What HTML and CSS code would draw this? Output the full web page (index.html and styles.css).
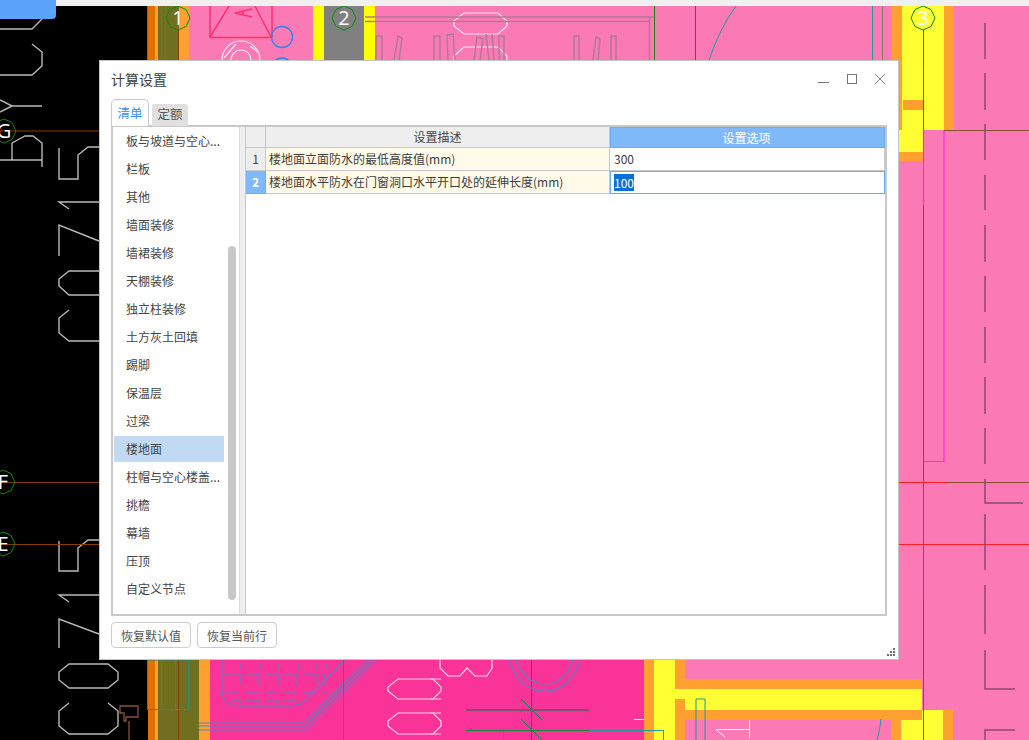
FILE: index.html
```html
<!DOCTYPE html>
<html lang="zh-CN">
<head>
<meta charset="utf-8">
<title>计算设置</title>
<link rel="stylesheet" href="styles.css">
</head>
<body>
<div class="desktop">
  <svg class="cad" width="1029" height="740" viewBox="0 0 1029 740" xmlns="http://www.w3.org/2000/svg">
    <rect x="0" y="6" width="1029" height="734" fill="#000"/>
    <!-- top-left columns -->
    <rect x="148" y="6" width="7" height="734" fill="#e07000"/>
    <rect x="155" y="6" width="3" height="734" fill="#ffa030"/>
    <rect x="158" y="6" width="21" height="60" fill="#6f6f1f"/>
    <rect x="179" y="6" width="10" height="60" fill="#ffa030"/>
    <rect x="189" y="6" width="124" height="60" fill="#fb7ab6"/>
    <rect x="313" y="6" width="11" height="60" fill="#ffff00"/>
    <rect x="324" y="6" width="40" height="60" fill="#808080"/>
    <rect x="364" y="6" width="11" height="60" fill="#ffff00"/>
    <rect x="375" y="6" width="654" height="734" fill="#fb7ab6"/>
    <!-- top-right band -->
    <rect x="892" y="6" width="10" height="124" fill="#ffa030"/>
    <rect x="902" y="6" width="42" height="124" fill="#ffff33"/>
    <rect x="944" y="6" width="10" height="124" fill="#ffa030"/>
    <rect x="898" y="130" width="25" height="22" fill="#ffff33"/>
    <rect x="898" y="152" width="25" height="9" fill="#ffa030"/>
    <rect x="903" y="100" width="20" height="10" fill="#ffa030"/>
    <!-- bottom columns -->
    <rect x="158" y="660" width="41" height="80" fill="#6f6f1f"/>
    <rect x="199" y="660" width="11" height="80" fill="#ffa030"/>
    <rect x="210" y="660" width="434" height="80" fill="#f93397"/>
    <rect x="644" y="660" width="10" height="80" fill="#ffa030"/>
    <rect x="654" y="660" width="21" height="80" fill="#ffff33"/>
    <rect x="675" y="660" width="10" height="80" fill="#ffa030"/>
    <rect x="685" y="679" width="237" height="10" fill="#ffa030"/>
    <rect x="675" y="689" width="247" height="21" fill="#ffff33"/>
    <rect x="675" y="699" width="10" height="11" fill="#ffa030"/>
    <rect x="685" y="710" width="237" height="10" fill="#ffa030"/>
    <rect x="891" y="720" width="10" height="20" fill="#ffa030"/>
    <rect x="901" y="720" width="42" height="20" fill="#ffff33"/>
    <rect x="922" y="710" width="21" height="10" fill="#ffff33"/>
    <rect x="943" y="710" width="10" height="30" fill="#ffa030"/>
    <g fill="none" stroke="#b9b9b9" stroke-width="1.4">
      <polyline points="0,29 32,29 42,19"/>
      <polyline points="32,44 42,52 42,66 32,75 0,75"/>
      <polyline points="0,100 12,106 42,106"/>
      <polyline points="12,106 0,112"/>
      <polyline points="0,160 42,160"/>
      <polyline points="12,143 25,136 33,136 42,143 42,167"/>
      <polyline points="59,148 59,179 78,179 78,155 88,147 99,147"/>
      <polyline points="69,209 59,202 99,202"/>
      <polyline points="59,256 59,225 99,241"/>
      <polyline points="99,271 69,271 59,279 59,286 69,295 99,295"/>
      <polyline points="69,310 59,318 59,333 69,341 99,341"/>
      <polyline points="59,541 59,571 78,571 78,548 88,540 99,540"/>
      <polyline points="69,602 59,595 99,595"/>
      <polyline points="59,648 59,619 99,634"/>
      <polygon points="69,664 108,664 118,672 118,680 108,688 69,688 59,680 59,672"/>
      <polyline points="69,703 59,711 59,726 69,734 108,734 118,726 118,711 108,703"/>
    </g>
    <g fill="none" stroke="#fff" stroke-width="1">
      <polyline points="12,143 12,160"/>
    </g>
    <g fill="none" stroke="#8a5040" stroke-width="1.3">
      <polygon points="120,706 138,706 138,717 126,717 126,721 124,721 124,713 120,713"/>
      <line x1="129" y1="721" x2="129" y2="740"/>
    </g>
    <g stroke="#8a3c00" stroke-width="1">
      <line x1="0" y1="131" x2="99" y2="131"/>
      <line x1="0" y1="482.500" x2="99" y2="482.500"/>
      <line x1="0" y1="544.500" x2="99" y2="544.500"/>
      <line x1="178.500" y1="30" x2="178.500" y2="66"/>
      <line x1="178.500" y1="660" x2="178.500" y2="740"/>
    </g>
    <g fill="none" stroke="#2f8a70" stroke-width="1">
      <line x1="147.500" y1="6" x2="147.500" y2="66"/>
      <line x1="161.500" y1="6" x2="161.500" y2="66"/>
      <line x1="165.500" y1="6" x2="165.500" y2="66"/>
      <rect x="147.500" y="660" width="41" height="49.500"/>
      <line x1="161.500" y1="660" x2="161.500" y2="709"/>
      <line x1="175.500" y1="660" x2="175.500" y2="709"/>
    </g>
    <!-- grid bubbles -->
    <g fill="none" stroke="#0f8a0f" stroke-width="1">
      <polygon points="178,6 186,9.500 190,18 186,26.500 178,30 170,26.500 166,18 170,9.500"/>
      <polygon points="344,6 352,9.500 356,18 352,26.500 344,30 336,26.500 332,18 336,9.500"/>
      <polygon points="923,6 931,9.500 935,18 931,26.500 923,30 915,26.500 911,18 915,9.500"/>
      <polygon points="4,119 12,122.500 16,131 12,139.500 4,143 -4,139.500 -8,131 -4,122.500"/>
      <polygon points="3,470 11,473.500 15,482 11,490.500 3,494 -5,490.500 -9,482 -5,473.500"/>
      <polygon points="3,532 11,535.500 15,544 11,552.500 3,556 -5,552.500 -9,544 -5,535.500"/>
      <line x1="923.500" y1="30" x2="923.500" y2="65"/>
      <line x1="654.500" y1="6" x2="654.500" y2="60"/>
      <line x1="695.500" y1="6" x2="695.500" y2="60"/>
      <line x1="531.500" y1="660" x2="531.500" y2="740"/>
    </g>
    <g class="bubble-label" fill="#fff" text-anchor="middle">
      <text x="178" y="25">1</text>
      <text x="344" y="25">2</text>
      <text x="923" y="25">3</text>
      <text x="4" y="138">G</text>
      <text x="3" y="489">F</text>
      <text x="3" y="551">E</text>
    </g>
    <!-- top detail -->
    <g fill="none" stroke="#ff2f70" stroke-width="1.5">
      <polyline points="210,6 210,37.500 272,37.500 272,6"/>
      <line x1="210" y1="37" x2="229" y2="6"/>
      <line x1="255" y1="6" x2="271" y2="37"/>
      <polyline points="252,9 235,13 252,17"/>
      <polyline points="243,11 243,15"/>
    </g>
    <g fill="none" stroke="#2e86e8" stroke-width="1.3">
      <circle cx="282" cy="37" r="10.500"/>
      <circle cx="282" cy="68" r="10"/>
    </g>
    <g fill="none" stroke="#ffe4f0" stroke-width="1.200">
      <circle cx="241" cy="60" r="19"/>
      <circle cx="241" cy="60" r="10"/>
      <line x1="224" y1="58" x2="236" y2="44"/>
      <line x1="258" y1="52" x2="250" y2="46"/>
      <polygon points="464,13 498,13 507,21 507,26 498,34 464,34 454,26 454,21"/>
      <polyline points="454,60 454,56 464,47 498,47 507,56 507,60"/>
    </g>
    <g fill="none" stroke="#b07a95" stroke-width="1.500">
      <line x1="365" y1="17" x2="654" y2="17"/>
      <line x1="365" y1="21.500" x2="650" y2="21.500"/>
      <line x1="649.500" y1="17" x2="649.500" y2="60"/>
      <polyline points="376,60 376,36 382,36 382,60"/>
      <polyline points="394,60 398,36 402,38 399,60"/>
      <polyline points="434,60 434,36 440,36 440,60"/>
      <polyline points="448,60 447,35 453,34 455,60"/>
      <polyline points="474,60 477,37 483,39 480,60"/>
      <polyline points="489,60 486,34"/>
      <polyline points="494,60 492,34"/>
      <polyline points="499,60 499,36 504,36 504,60"/>
      <polyline points="574,60 574,36 579,36 579,60"/>
      <polyline points="593,60 596,37 600,39 598,60"/>
      <polyline points="611,60 611,36 616,36 616,60"/>
    </g>
    <g fill="none" stroke="#1f9aa0" stroke-width="1">
      <path d="M709 60 Q720 28 736 6"/>
      <line x1="872.500" y1="6" x2="872.500" y2="60"/>
      <path d="M881 719 Q880 730 877 740"/>
      <polyline points="696,740 696,699 705,699 705,740"/>
      <rect x="503.500" y="730.500" width="160" height="10"/>
    </g>
    <line x1="882.500" y1="6" x2="882.500" y2="60" stroke="#8a7a60" stroke-width="1"/>
    <!-- bottom detail -->
    <g fill="none" stroke="#5a80c4" stroke-width="1.100">
      <path d="M222 660 V690 Q222 706 240 706 H290 Q300 706 306 700 L345 660"/>
      <polyline points="199,723 303,723 368,660"/>
      <polyline points="199,726 305,726 372,660"/>
      <polyline points="199,730 306,730 376,660"/>
      <path d="M509 660 Q520 691 545 691 Q570 691 580 660"/>
      <path d="M516 660 Q525 684 545 684 Q565 684 573 660"/>
      <path d="M241 664V670M260 664V670M279 664V670M298 664V670M317 664V670M326 664V670M224 674H240V685M246 674H259V685M265 674H278V685M284 674H297V685M303 674H316V685M322 674H324V685M226 692H240M246 692H259M265 692H278M284 692H297M303 692H316M322 692H328M232 700H240V706M246 700H259V706M265 700H278V706M284 700H297"/>
    </g>
    <g fill="none" stroke="#ffd4e6" stroke-width="1.200">
      <polyline points="441,679 398,679 388,687 388,691 398,699 441,699"/>
      <polyline points="441,713 398,713 388,721 388,726 398,734 441,734"/>
      <polyline points="440,660 440,668 448,676 460,676 467,668 475,676 487,676 492,668 492,660"/>
      <polyline points="430,679 433,679 441,687 441,691 433,699 430,699"/>
      <polyline points="430,713 433,713 441,721 441,726 433,734 430,734"/>
    </g>
    <line x1="343.500" y1="690" x2="343.500" y2="740" stroke="#ff1f50" stroke-width="1"/>
    <line x1="343.500" y1="660" x2="343.500" y2="690" stroke="#a54a55" stroke-width="1"/>
    <line x1="466" y1="710" x2="589" y2="710" stroke="#805070" stroke-width="2"/>
    <g stroke="#0f8a3a" stroke-width="1">
      <line x1="466" y1="730.500" x2="589" y2="730.500"/>
      <line x1="521" y1="699" x2="542" y2="720"/>
      <line x1="521" y1="719" x2="542" y2="740"/>
    </g>
    <line x1="589" y1="730.500" x2="664" y2="730.500" stroke="#1f9aa0" stroke-width="1"/>
    <line x1="634" y1="719.500" x2="644" y2="719.500" stroke="#fff" stroke-width="1"/>
    <g fill="none" stroke="#fff" stroke-width="1">
      <polyline points="725,737 716,729.500 749,729.500"/>
      <line x1="749.500" y1="720" x2="749.500" y2="738"/>
    </g>
    <!-- right side lines -->
    <g fill="none" stroke="#ff2ad8" stroke-width="1.200">
      <polyline points="923.500,130 923.500,205"/>
      <polyline points="923.500,461.500 944,461.500 944,130"/>
    </g>
    <g stroke="#8a5030" stroke-width="1">
      <line x1="923.500" y1="65" x2="923.500" y2="130"/>
      <line x1="923.500" y1="205" x2="923.500" y2="482"/>
      <line x1="923.500" y1="600" x2="923.500" y2="740"/>
      <line x1="944" y1="130.500" x2="1029" y2="130.500"/>
      <line x1="947" y1="482.500" x2="1029" y2="482.500"/>
    </g>
    <g stroke="#ff1f1f" stroke-width="1">
      <line x1="898" y1="482.500" x2="947" y2="482.500"/>
      <line x1="923.500" y1="482" x2="923.500" y2="600"/>
      <line x1="898" y1="544.500" x2="1029" y2="544.500"/>
    </g>
    <g fill="none" stroke="#8a4a70" stroke-width="1.500">
      <path d="M985 23V59M985 73V110M985 124V160M985 175V210M985 225V262M985 276V312M985 327V363M985 377V414M985 428V464M985 479V503H1023M985 514V570M985 585V634M985 650V689H1015M985 740V730H1015"/>
    </g>
  </svg>
  <div class="topbar"></div>
  <div class="topbar-btn"></div>

  <section class="dialog">
    <header class="titlebar">
      <h1 class="title">计算设置</h1>
      <div class="win-controls">
        <svg class="win-icon" width="12" height="12" viewBox="0 0 12 12"><line x1="0" y1="9.500" x2="11" y2="9.500" stroke="#777" stroke-width="1"/></svg>
        <svg class="win-icon" width="12" height="12" viewBox="0 0 12 12"><rect x="1.500" y="1.500" width="9" height="9" fill="none" stroke="#777" stroke-width="1"/></svg>
        <svg class="win-icon" width="12" height="12" viewBox="0 0 12 12"><path d="M1 1L11 11M11 1L1 11" fill="none" stroke="#888" stroke-width="1"/></svg>
      </div>
    </header>
    <nav class="tabs">
      <span class="tab tab-active">清单</span>
      <span class="tab">定额</span>
    </nav>
    <div class="panel">
      <aside class="side">
        <ul class="list">
          <li class="item">板与坡道与空心...</li>
          <li class="item">栏板</li>
          <li class="item">其他</li>
          <li class="item">墙面装修</li>
          <li class="item">墙裙装修</li>
          <li class="item">天棚装修</li>
          <li class="item">独立柱装修</li>
          <li class="item">土方灰土回填</li>
          <li class="item">踢脚</li>
          <li class="item">保温层</li>
          <li class="item">过梁</li>
          <li class="item item-selected">楼地面</li>
          <li class="item">柱帽与空心楼盖...</li>
          <li class="item">挑檐</li>
          <li class="item">幕墙</li>
          <li class="item">压顶</li>
          <li class="item">自定义节点</li>
        </ul>
        <div class="scroll-thumb"></div>
      </aside>
      <div class="splitter"></div>
      <div class="grid">
        <div class="cell head corner"></div>
        <div class="cell head">设置描述</div>
        <div class="cell head head-active">设置选项</div>
        <div class="cell num">1</div>
        <div class="cell desc">楼地面立面防水的最低高度值(mm)</div>
        <div class="cell value">300</div>
        <div class="cell num num-active">2</div>
        <div class="cell desc">楼地面水平防水在门窗洞口水平开口处的延伸长度(mm)</div>
        <div class="cell value value-edit"><span class="selection">100</span></div>
      </div>
    </div>
    <footer class="actions">
      <button class="btn" type="button">恢复默认值</button>
      <button class="btn" type="button">恢复当前行</button>
    </footer>
    <svg class="grip" width="8" height="8" viewBox="0 0 8 8"><path d="M6 0h2v2H6zM3 3h2v2H3zM6 3h2v2H6zM0 6h2v2H0zM3 6h2v2H3zM6 6h2v2H6z" fill="#6f6f6f"/></svg>
  </section>
</div>
</body>
</html>
```
FILE: styles.css
```css
* { box-sizing: border-box; }
html, body { margin: 0; padding: 0; }
body {
  width: 1029px;
  height: 740px;
  overflow: hidden;
  background: #000;
  font-family: "Noto Sans CJK SC", "Noto Sans", "Liberation Sans", sans-serif;
  font-size: 12px;
  color: #3c3c3c;
}
.desktop { position: relative; width: 1029px; height: 740px; overflow: hidden; background: #f0f0f0; }
.cad { position: absolute; left: 0; top: 0; display: block; }
.bubble-label text { font-family: "Open Sans", "Noto Sans", sans-serif; font-size: 20px; }
.topbar { position: absolute; left: 0; top: 0; width: 1029px; height: 6px; background: #f0f0f0; }
.topbar-btn { position: absolute; left: 0; top: 0; width: 56px; height: 19px; background: #5aa5fb; border-bottom-right-radius: 4px; }

.dialog {
  position: absolute;
  left: 99px;
  top: 60px;
  width: 800px;
  height: 600px;
  background: #fff;
  border: 1px solid #c4c4c4;
  display: flex;
  flex-direction: column;
  padding: 0 10px 0 11px;
}
.titlebar { height: 39px; display: flex; align-items: center; justify-content: space-between; flex: none; }
.title { margin: -2px 0 0; font-size: 14px; font-weight: 400; color: #3c3c3c; line-height: 39px; }
.win-controls { display: flex; gap: 16px; margin-right: 2px; margin-top: -3px; }
.win-icon { display: block; }

.tabs { display: flex; align-items: flex-end; gap: 3px; height: 26px; flex: none; position: relative; z-index: 1; margin-bottom: -1px; }
.tab {
  width: 36px;
  height: 22px;
  background: #e0e0e0;
  border-radius: 3px 3px 0 0;
  text-align: center;
  line-height: 20px;
  font-size: 12.500px;
  color: #555;
}
.tab-active {
  width: 38px;
  height: 27px;
  background: #fff;
  border: 1px solid #c8c8c8;
  border-bottom: 0;
  border-radius: 5px 5px 0 0;
  color: #3b8fe8;
  line-height: 26px;
}

.panel {
  width: 776px;
  height: 491px;
  border: 2px solid #c8c8c8;
  display: flex;
  flex: none;
}
.side { position: relative; width: 126px; flex: none; overflow: hidden; background: #fff; }
.list { list-style: none; margin: 0; padding: 1px 0 0 1px; }
.item {
  width: 110px;
  height: 26px;
  margin-bottom: 2px;
  padding-left: 12px;
  line-height: 26px;
  white-space: nowrap;
  color: #444;
}
.item-selected { background: #c2d9f2; }
.scroll-thumb {
  position: absolute;
  left: 115px;
  top: 119px;
  width: 8px;
  height: 354px;
  border-radius: 4px;
  background: #c8c8c8;
}
.splitter { width: 7px; flex: none; background: #eeeeee; border-left: 1px solid #dcdcdc; border-right: 1px solid #c8c8c8; }

.grid {
  flex: 1;
  display: grid;
  grid-template-columns: 20px 344px 275px;
  grid-template-rows: 21px 23px 23px;
  align-content: start;
}
.cell {
  border-right: 1px solid #c8c8c8;
  border-bottom: 1px solid #c8c8c8;
  line-height: 22px;
  white-space: nowrap;
  overflow: hidden;
}
.head { background: #eeeeee; text-align: center; line-height: 20px; color: #444; }
.head-active { background: #7fb9f9; color: #fff; border: 1px solid #6eaef0; line-height: 19px; padding-right: 2px; }
.num { background: #eeeeee; text-align: center; color: #444; }
.num-active { background: #7fb9f9; color: #fff; font-weight: 700; border-right-color: #6eaef0; border-bottom-color: #6eaef0; }
.desc { background: #fffbe8; padding-left: 3px; color: #3c3c3c; }
.value { background: #fff; padding-left: 4px; color: #3c3c3c; }
.value-edit { border: 1px solid #66adf2; padding-left: 3px; line-height: 21px; }
.selection { display: inline-block; height: 17px; line-height: 17px; background: #0a70d8; color: #fff; }

.actions { display: flex; gap: 6px; margin-top: 6px; }
.btn {
  width: 80px;
  height: 26px;
  padding: 0;
  background: #fff;
  border: 1px solid #cccccc;
  border-radius: 4px;
  font-family: inherit;
  font-size: 12px;
  color: #555;
}
.grip { position: absolute; right: 3px; bottom: 3px; display: block; }
```
